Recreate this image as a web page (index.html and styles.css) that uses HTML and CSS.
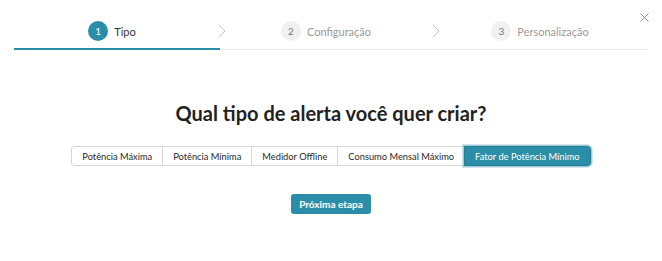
FILE: index.html
```html
<!DOCTYPE html>
<html lang="pt-BR">
<head>
<meta charset="utf-8">
<title>Novo alerta</title>
<link rel="stylesheet" href="styles.css">
</head>
<body>
<div class="modal">
  <button class="close" aria-label="Fechar">
    <svg width="9" height="9" viewBox="0 0 9 9"><path d="M0.5 0.5L8.5 8.5M8.5 0.5L0.5 8.5" stroke="#8c8c8c" stroke-width="1" fill="none"/></svg>
  </button>
  <nav class="steps">
    <div class="step active"><span class="num">1</span><span class="label">Tipo</span></div>
    <span class="chev"><svg width="8" height="14" viewBox="0 0 8 14"><path d="M1 1L7 7L1 13" stroke="#c4c4c4" stroke-width="1" fill="none"/></svg></span>
    <div class="step"><span class="num">2</span><span class="label">Configuração</span></div>
    <span class="chev"><svg width="8" height="14" viewBox="0 0 8 14"><path d="M1 1L7 7L1 13" stroke="#c4c4c4" stroke-width="1" fill="none"/></svg></span>
    <div class="step"><span class="num">3</span><span class="label">Personalização</span></div>
  </nav>
  <h1 class="title">Qual tipo de alerta você quer criar?</h1>
  <div class="options">
    <button class="opt">Potência Máxima</button>
    <button class="opt">Potência Mínima</button>
    <button class="opt">Medidor Offline</button>
    <button class="opt">Consumo Mensal Máximo</button>
    <button class="opt selected">Fator de Potência Mínimo</button>
  </div>
  <div class="actions">
    <button class="primary">Próxima etapa</button>
  </div>
</div>
</body>
</html>
```
FILE: styles.css
```css
* { box-sizing: border-box; }
html, body { margin: 0; padding: 0; background: #fff; }
body { font-family: Lato, "Noto Sans", sans-serif; color: #333; }
.modal { position: relative; width: 662px; height: 261px; padding: 0 14px; }
.close {
  position: absolute; top: 12px; right: 12px;
  width: 11px; height: 11px; padding: 1px; border: 0; background: none;
  display: flex; align-items: center; justify-content: center;
}
.steps {
  display: flex; align-items: stretch;
  padding-top: 21px;
  border-bottom: 1px solid #ececec;
}
.step {
  flex: 1; display: flex; align-items: center; justify-content: center;
  gap: 6px; padding: 0 10px 7px 0; margin-bottom: -1px;
  border-bottom: 2px solid transparent;
}
.step.active { border-bottom-color: #2b8ea8; }
.chev { width: 8px; display: flex; align-items: flex-start; padding-top: 3px; margin-left: -2px; margin-right: 2px; }
.num {
  width: 20px; height: 20px; border-radius: 50%;
  background: #f0f0f0; color: #777; font-size: 10px;
  display: flex; align-items: center; justify-content: center;
}
.label { font-size: 11px; color: #9a9a9a; }
.step.active .num { background: #2b8ea8; color: #fff; }
.step.active .label { color: #333; }
.title {
  margin: 51px 0 0; text-align: center;
  font-size: 20px; line-height: 24px; font-weight: 700; color: #222;
}
.options { display: flex; justify-content: center; margin-top: 21px; padding-left: 1px; }
.opt {
  height: 20px; padding: 0 10px; margin-left: -1px;
  font-family: inherit; font-size: 9.3px; color: #2a2a2a; white-space: nowrap;
  background: #fff; border: 1px solid #d6d6d6;
}
.opt:first-child { border-radius: 3px 0 0 3px; }
.opt.selected {
  background: #2b8ea8; color: #fff; border-color: #2a7f96;
  border-radius: 0 4px 4px 0;
  box-shadow: 0 0 0 1.5px rgba(43,142,168,0.45);
}
.actions { display: flex; justify-content: center; margin-top: 28px; }
.primary {
  width: 80px; height: 20px; border: 0; border-radius: 3px; white-space: nowrap;
  background: #2b8ea8; color: #fff; font-family: inherit;
  font-size: 10px; font-weight: 700;
}
```
